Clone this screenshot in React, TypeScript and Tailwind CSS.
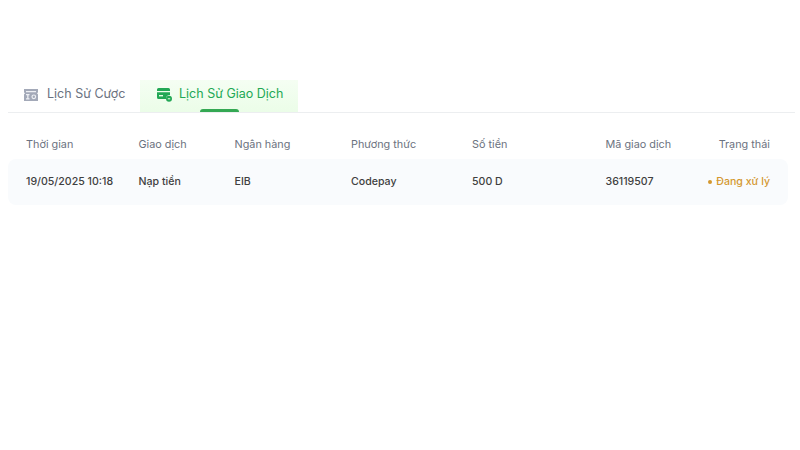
const cols = 'grid grid-cols-[112.5px_96px_116.5px_121px_133.5px_1fr_80px] px-[18px]';

function TicketIcon() {
  return (
    <svg width="16" height="16" viewBox="0 0 16 16" aria-hidden className="shrink-0">
      <path
        d="M1 2h14v3.600a.8.8 0 0 0 0 1.600V14H1V7.200a.8.8 0 0 0 0-1.600V2z"
        fill="#a3a9b8"
      />
      <path d="M3 4h10v1.300H3zM3 7h3.500v1.300H3zM4.200 8.300h1.300v3H4.200zM3 11.300h3.500v1.200H3z" fill="#eef0f4" />
      <circle cx="10.800" cy="9.800" r="1.800" fill="none" stroke="#eef0f4" strokeWidth="1.200" />
    </svg>
  );
}

function CardIcon() {
  return (
    <svg width="17" height="16" viewBox="0 0 17 16" aria-hidden className="shrink-0">
      <path d="M2.500 1h10A1.500 1.500 0 0 1 14 2.500V4H1V2.500A1.500 1.500 0 0 1 2.500 1z" fill="#22a855" />
      <path d="M1 5.300h13V8a4 4 0 0 0-4 4H2.500A1.500 1.500 0 0 1 1 10.500V5.300z" fill="#22a855" />
      <path d="M3 8h4v1.400H3z" fill="#e9fde6" />
      <circle cx="13" cy="11.800" r="3" fill="#22a855" />
      <path d="M11.800 11.800h2.400" stroke="#e9fde6" strokeWidth="1" />
    </svg>
  );
}

export default function App() {
  return (
    <div className="min-h-[450px] bg-white pt-20 pl-2 pr-[5px] font-['Inter',sans-serif]">
      <div className="flex h-[33px] border-b border-[#eceef0]">
        <button className="flex h-8 w-[132px] items-center gap-2 pb-[3px] pl-[15px] text-[12.500px] text-[#6b7280]">
          <TicketIcon />
          Lịch Sử Cược
        </button>
        <button className="relative flex h-8 w-[158px] items-center gap-[6px] bg-gradient-to-b from-[#f5fef3] to-[#ebfde8] pb-[3px] pl-4 text-[12.500px] text-[#22a855]">
          <CardIcon />
          Lịch Sử Giao Dịch
          <span className="absolute bottom-0 left-[60px] h-[3px] w-[39px] rounded-t-[3px] bg-[#34a853]" />
        </button>
      </div>
      <div className="mr-[7px]">
        <div className={`${cols} h-[46px] items-center pt-[17px] text-[10.850px] text-[#6b7280]`}>
          <span>Thời gian</span>
          <span>Giao dịch</span>
          <span>Ngân hàng</span>
          <span>Phương thức</span>
          <span>Số tiền</span>
          <span>Mã giao dịch</span>
          <span className="text-right">Trạng thái</span>
        </div>
        <div className={`${cols} h-[46px] items-center rounded-lg bg-[#f9fbfd] text-[10.600px] font-medium text-[#404040]`}>
          <span>19/05/2025 10:18</span>
          <span>Nạp tiền</span>
          <span>EIB</span>
          <span>Codepay</span>
          <span>500 D</span>
          <span>36119507</span>
          <span className="flex items-center justify-end gap-1 text-[#d4982f]">
            <span className="h-1 w-1 rounded-full bg-[#d4982f]" />
            Đang xử lý
          </span>
        </div>
      </div>
    </div>
  );
}
